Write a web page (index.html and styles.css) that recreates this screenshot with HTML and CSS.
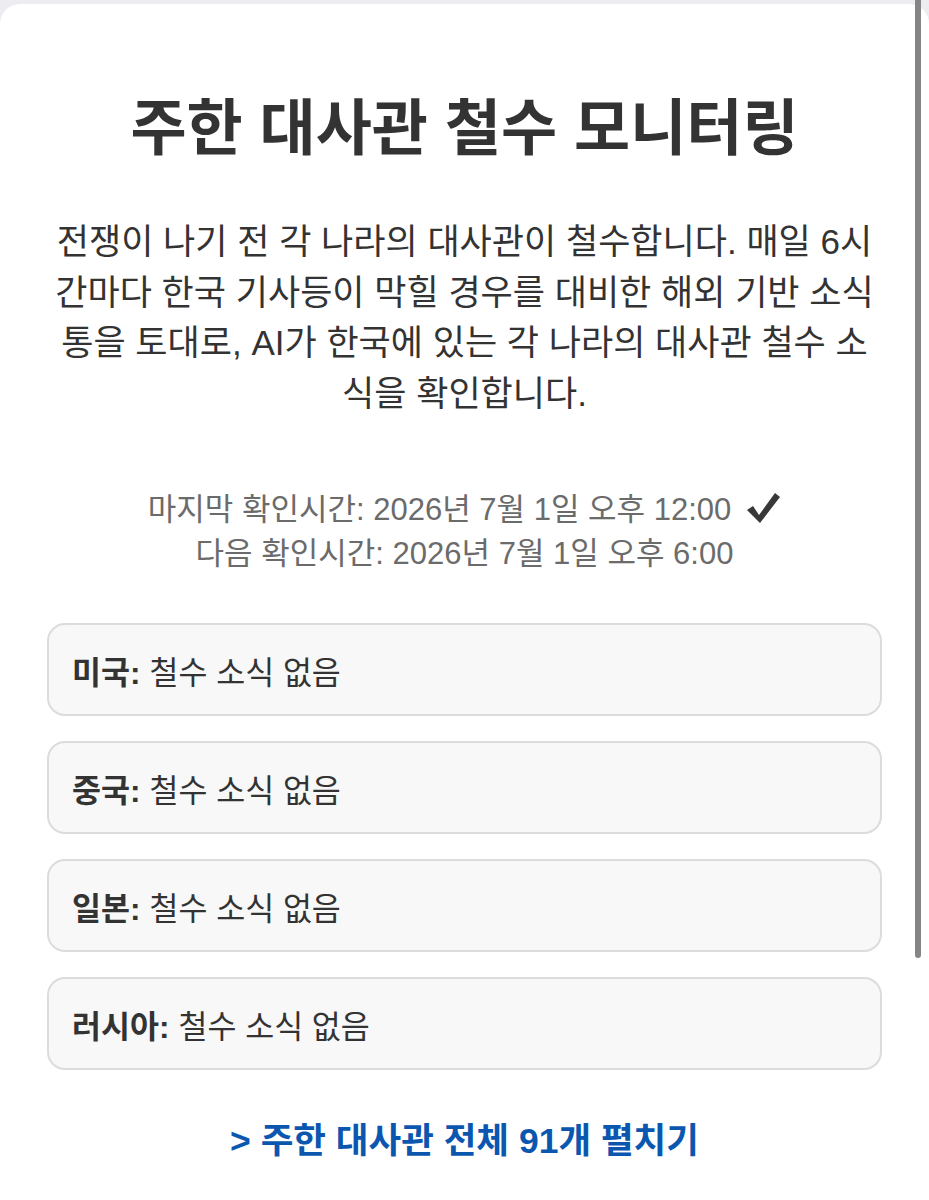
FILE: index.html
```html
<!DOCTYPE html>
<html lang="ko">

<head>
    <meta charset="UTF-8">
    <meta name="viewport" content="width=device-width, initial-scale=1" />
    <title>주한 대사관 철수 모니터링</title>
    <link rel="stylesheet" href="styles.css">
</head>

<body>

    <div class="sheet">

        <h1 class="title">주한 대사관 철수 모니터링</h1>

        <p class="intro">전쟁이 나기 전 각 나라의 대사관이 철수합니다. 매일 6시간마다 한국 기사등이 막힐 경우를 대비한 해외 기반 소식통을 토대로, AI가 한국에 있는 각 나라의 대사관 철수 소식을 확인합니다.</p>

        <div class="checked">
            <div class="checked-row">
                마지막 확인시간: 2026년 7월 1일 오후 12:00
                <svg class="tick" width="36" height="34" viewBox="0 0 36 34">
                    <path d="M2 19 L8 15 L14 24 L30 2 L35 6 L15 32 Z" />
                </svg>
            </div>
            <div class="checked-row">다음 확인시간: 2026년 7월 1일 오후 6:00</div>
        </div>

        <div class="countries">
            <div class="country"><b>미국:</b> 철수 소식 없음</div>
            <div class="country"><b>중국:</b> 철수 소식 없음</div>
            <div class="country"><b>일본:</b> 철수 소식 없음</div>
            <div class="country"><b>러시아:</b> 철수 소식 없음</div>
        </div>

        <a class="expand" href="#">&gt; 주한 대사관 전체 91개 펼치기</a>

    </div>

    <!-- overlay scrollbar like on the phone -->
    <div class="scroll-thumb"></div>

</body>

</html>
```

FILE: styles.css
```css
:root {
    --text-color: #333;
    --muted-color: #6b6b6b;
    --card-border: #dcdcdc;
}

html {
    overflow: hidden;
}

body {
    background-color: #ececf1;
    font-family: 'Liberation Sans', 'Noto Sans CJK KR', sans-serif;
    margin: 0;
}

.sheet {
    background-color: #fff;
    border-radius: 20px 20px 0 0;
    box-sizing: border-box;
    color: var(--text-color);
    height: 1196px;
    margin-top: 4px;
    padding: 89px 47px 0;
    text-align: center;
}

.title {
    font-size: 61px;
    font-weight: 700;
    line-height: 1.2;
    margin: 0;
}

.intro {
    font-size: 35px;
    line-height: 50.5px;
    margin: 51px 0 0;
}

/* ====== LAST / NEXT CHECK ====== */

.checked {
    color: var(--muted-color);
    font-size: 31px;
    line-height: 44px;
    margin-top: 69px;
}

.checked-row {
    align-items: center;
    display: flex;
    gap: 14px;
    justify-content: center;
}

.tick {
    fill: #383838;
    margin-top: -4px;
}

/* ====== COUNTRIES ====== */

.countries {
    display: flex;
    flex-direction: column;
    gap: 25px;
    margin-top: 47px;
}

.country {
    align-items: center;
    background-color: #f8f8f8;
    border: 2px solid var(--card-border);
    border-radius: 18px;
    box-sizing: border-box;
    display: flex;
    font-size: 31.5px;
    gap: 9px;
    height: 93px;
    padding: 0 23px;
}

.country b {
    font-weight: 700;
}

.expand {
    color: #0b57b0;
    display: block;
    font-size: 35.5px;
    font-weight: 700;
    line-height: 44px;
    margin-top: 49px;
    text-decoration: none;
}

.scroll-thumb {
    background-color: #858585;
    border-radius: 0 0 4px 4px;
    height: 958px;
    position: fixed;
    right: 8px;
    top: 0;
    width: 6px;
}
```
